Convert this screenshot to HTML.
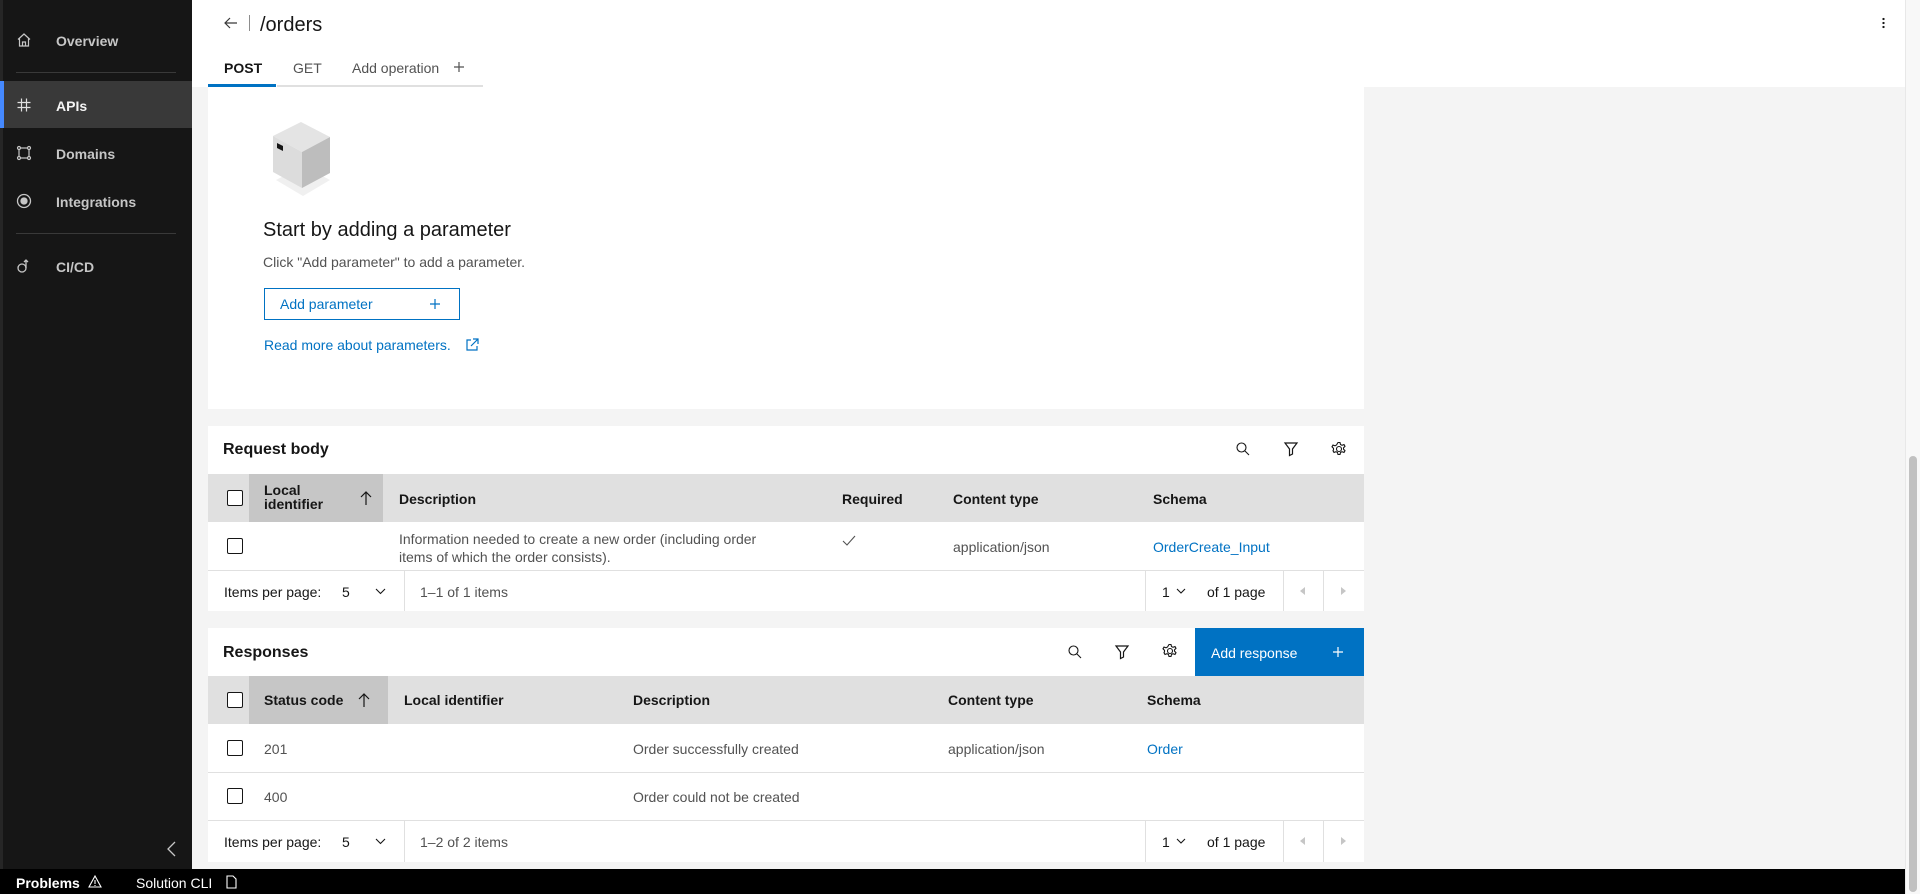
<!DOCTYPE html>
<html><head><meta charset="utf-8"><style>
*{box-sizing:border-box;margin:0;padding:0}
body{width:1920px;height:894px;overflow:hidden;background:#f4f4f4;font-family:"Liberation Sans",sans-serif;color:#161616;position:relative}
.a{position:absolute;white-space:nowrap}
.side{left:0;top:0;width:192px;height:869px;background:#161616}
.nav{color:#c6c6c6;font-size:14px;font-weight:bold;left:56px}
.div{left:16px;width:160px;height:1px;background:#393939}
.panel{background:#fff;left:208px;width:1156px}
.th{background:#e0e0e0}
.hd{font-size:14px;font-weight:bold;color:#161616}
.td{font-size:14px;color:#525252}
.cb{width:16px;height:16px;border:1px solid #161616;border-radius:2px;background:#fff}
.ln{background:#e0e0e0}
.blue{color:#0072c3}
svg{position:absolute}
</style></head><body>
<div class="a side"></div>
<div class="a" style="left:0;top:0;width:3px;height:869px;background:#262626"></div>
<svg style="left:16px;top:32px" width="16" height="16" viewBox="0 0 16 16" fill="none" stroke="#c6c6c6" stroke-width="1.2"><path d="M2 7.5 8 2l6 5.5M3.5 6.5V14h9V6.5M6.5 14V10h3v4"/></svg>
<div class="a nav" style="top:33px">Overview</div>
<div class="a div" style="top:72px;left:16px"></div>
<div class="a" style="left:0;top:81px;width:192px;height:47px;background:#393939"></div>
<div class="a" style="left:0;top:81px;width:4px;height:47px;background:#4589ff"></div>
<svg style="left:16px;top:97px" width="16" height="16" viewBox="0 0 16 16" fill="none" stroke="#e0e0e0" stroke-width="1.2"><path d="M5.5 1.5v13M10.5 1.5v13M1.5 5.5h13M1.5 10.5h13"/></svg>
<div class="a nav" style="top:98px;color:#f4f4f4">APIs</div>
<svg style="left:16px;top:145px" width="16" height="16" viewBox="0 0 16 16" fill="none" stroke="#c6c6c6" stroke-width="1.2"><rect x="3" y="3" width="10" height="10"/><circle cx="3" cy="3" r="1.5" fill="#161616"/><circle cx="13" cy="3" r="1.5" fill="#161616"/><circle cx="3" cy="13" r="1.5" fill="#161616"/><circle cx="13" cy="13" r="1.5" fill="#161616"/></svg>
<div class="a nav" style="top:146px">Domains</div>
<svg style="left:16px;top:193px" width="16" height="16" viewBox="0 0 16 16" fill="none" stroke="#c6c6c6" stroke-width="1.3"><circle cx="8" cy="8" r="6.5"/><circle cx="8" cy="8" r="3" fill="#c6c6c6"/></svg>
<div class="a nav" style="top:194px">Integrations</div>
<div class="a div" style="top:233px"></div>
<svg style="left:16px;top:258px" width="16" height="16" viewBox="0 0 16 16" fill="none" stroke="#c6c6c6" stroke-width="1.3"><circle cx="6" cy="10" r="4"/><path d="M10 10V2M8 4l2-2 2 2"/></svg>
<div class="a nav" style="top:259px">CI/CD</div>
<svg style="left:164px;top:840px" width="16" height="18" viewBox="0 0 16 18" fill="none" stroke="#c6c6c6" stroke-width="1.3"><path d="M11 2 4 9l7 7"/></svg>

<div class="a" style="left:192px;top:0;width:1713px;height:87px;background:#fff"></div>
<svg style="left:223px;top:15px" width="16" height="16" viewBox="0 0 16 16" fill="none" stroke="#393939" stroke-width="1.2"><path d="M14 8H2M7 3 2 8l5 5"/></svg>
<div class="a" style="left:249px;top:15px;width:1px;height:16px;background:#8d8d8d"></div>
<div class="a" style="left:260px;top:14px;font-size:20px">/orders</div>
<div class="a" style="left:1882px;top:17px;width:3px;height:12px;background:radial-gradient(circle,#161616 1px,transparent 1.3px) 0 0/3px 4px"></div>
<div class="a hd" style="left:224px;top:60px">POST</div>
<div class="a td" style="left:293px;top:60px">GET</div>
<div class="a td" style="left:352px;top:60px">Add operation</div>
<svg style="left:454px;top:62px" width="10" height="10" viewBox="0 0 10 10" stroke="#525252" stroke-width="1.2"><path d="M5 0v10M0 5h10"/></svg>
<div class="a" style="left:208px;top:84px;width:68px;height:3px;background:#0072c3"></div>
<div class="a" style="left:277px;top:85px;width:206px;height:2px;background:#e0e0e0"></div>

<div class="a panel" style="top:87px;height:322px"></div>
<svg style="left:268px;top:118px" width="70" height="82" viewBox="0 0 70 82"><polygon points="8,62 35,48 62,62 35,78" fill="#f0f0f0"/><polygon points="5,18 33,4 62,19 34,34" fill="#e4e4e4"/><polygon points="5,18 34,34 34,70 5,54" fill="#dcdcdc"/><polygon points="34,34 62,19 62,55 34,70" fill="#bdbdbd"/><polygon points="9,25 15,28 15,33 9,30" fill="#161616"/></svg>
<div class="a" style="left:263px;top:219px;font-size:20px">Start by adding a parameter</div>
<div class="a td" style="left:263px;top:254px">Click "Add parameter" to add a parameter.</div>
<div class="a" style="left:264px;top:288px;width:196px;height:32px;border:1px solid #0072c3"></div>
<div class="a blue" style="left:280px;top:296px;font-size:14px">Add parameter</div>
<svg style="left:430px;top:299px" width="10" height="10" viewBox="0 0 10 10" stroke="#0072c3" stroke-width="1.2"><path d="M5 0v10M0 5h10"/></svg>
<div class="a blue" style="left:264px;top:337px;font-size:14px">Read more about parameters.</div>
<svg style="left:465px;top:338px" width="14" height="14" viewBox="0 0 14 14" fill="none" stroke="#0072c3" stroke-width="1.2"><path d="M6 2H2v10h10V8M8 1h5v5M13 1 6 8"/></svg>

<div class="a panel" style="top:426px;height:185px"></div>
<div class="a" style="left:223px;top:441px;font-size:16px;font-weight:bold">Request body</div>
<svg style="left:1235px;top:441px" width="16" height="16" viewBox="0 0 16 16" fill="none" stroke="#161616" stroke-width="1.1"><circle cx="6.5" cy="6.5" r="4.5"/><path d="m10 10 4 4"/></svg>
<svg style="left:1283px;top:441px" width="16" height="16" viewBox="0 0 16 16" fill="none" stroke="#161616" stroke-width="1.2"><path d="M2 2h12L9.5 8v5l-3 1.5V8z"/></svg>
<svg style="left:1331px;top:441px" width="16" height="16" viewBox="0 0 16 16" fill="none" stroke="#161616" stroke-width="1.1"><circle cx="8" cy="8" r="2.5"/><path d="M7 1.5h2l.5 2 1.5.8 2-.7 1 1.7-1.5 1.5v1.4l1.5 1.5-1 1.7-2-.7-1.5.8-.5 2H7l-.5-2-1.5-.8-2 .7-1-1.7L2.5 8.7V7.3L1 5.8l1-1.7 2 .7 1.5-.8z"/></svg>
<div class="a th" style="left:208px;top:474px;width:1156px;height:48px"></div>
<div class="a" style="left:249px;top:474px;width:134px;height:48px;background:#c6c6c6"></div>
<div class="a cb" style="left:227px;top:490px"></div>
<div class="a hd" style="left:264px;top:483px;line-height:14px;white-space:normal;width:70px">Local identifier</div>
<svg style="left:358px;top:490px" width="16" height="16" viewBox="0 0 16 16" fill="none" stroke="#161616" stroke-width="1.2"><path d="M8 15V2M3 7l5-5 5 5"/></svg>
<div class="a hd" style="left:399px;top:491px">Description</div>
<div class="a hd" style="left:842px;top:491px">Required</div>
<div class="a hd" style="left:953px;top:491px">Content type</div>
<div class="a hd" style="left:1153px;top:491px">Schema</div>
<div class="a cb" style="left:227px;top:538px"></div>
<div class="a td" style="left:399px;top:530px;line-height:18px">Information needed to create a new order (including order<br>items of which the order consists).</div>
<svg style="left:842px;top:535px" width="14" height="12" viewBox="0 0 14 12" fill="none" stroke="#525252" stroke-width="1.1"><path d="M1 6l4 4 8-9"/></svg>
<div class="a td" style="left:953px;top:539px">application/json</div>
<div class="a blue" style="left:1153px;top:539px;font-size:14px">OrderCreate_Input</div>
<div class="a ln" style="left:208px;top:570px;width:1156px;height:1px"></div>
<div class="a" style="left:224px;top:584px;font-size:14px">Items per page:</div>
<div class="a" style="left:342px;top:584px;font-size:14px">5</div>
<svg style="left:375px;top:588px" width="11" height="7" viewBox="0 0 11 7" fill="none" stroke="#161616" stroke-width="1.1"><path d="M1 1l4.5 4.5L10 1"/></svg>
<div class="a ln" style="left:404px;top:571px;width:1px;height:40px"></div>
<div class="a td" style="left:420px;top:584px">1–1 of 1 items</div>
<div class="a ln" style="left:1145px;top:571px;width:1px;height:40px"></div>
<div class="a" style="left:1162px;top:584px;font-size:14px">1</div>
<svg style="left:1176px;top:588px" width="10" height="7" viewBox="0 0 10 7" fill="none" stroke="#161616" stroke-width="1.1"><path d="M1 1l4 4 4-4"/></svg>
<div class="a" style="left:1207px;top:584px;font-size:14px">of 1 page</div>
<div class="a ln" style="left:1283px;top:571px;width:1px;height:40px"></div>
<svg style="left:1300px;top:587px" width="6" height="8" viewBox="0 0 6 8" fill="#c6c6c6"><path d="M5 0v8L0 4z"/></svg>
<div class="a ln" style="left:1323px;top:571px;width:1px;height:40px"></div>
<svg style="left:1341px;top:587px" width="6" height="8" viewBox="0 0 6 8" fill="#c6c6c6"><path d="M0 0v8l5-4z"/></svg>

<div class="a panel" style="top:628px;height:234px"></div>
<div class="a" style="left:223px;top:644px;font-size:16px;font-weight:bold">Responses</div>
<svg style="left:1067px;top:644px" width="16" height="16" viewBox="0 0 16 16" fill="none" stroke="#161616" stroke-width="1.1"><circle cx="6.5" cy="6.5" r="4.5"/><path d="m10 10 4 4"/></svg>
<svg style="left:1114px;top:644px" width="16" height="16" viewBox="0 0 16 16" fill="none" stroke="#161616" stroke-width="1.2"><path d="M2 2h12L9.5 8v5l-3 1.5V8z"/></svg>
<svg style="left:1162px;top:643px" width="16" height="16" viewBox="0 0 16 16" fill="none" stroke="#161616" stroke-width="1.1"><circle cx="8" cy="8" r="2.5"/><path d="M7 1.5h2l.5 2 1.5.8 2-.7 1 1.7-1.5 1.5v1.4l1.5 1.5-1 1.7-2-.7-1.5.8-.5 2H7l-.5-2-1.5-.8-2 .7-1-1.7L2.5 8.7V7.3L1 5.8l1-1.7 2 .7 1.5-.8z"/></svg>
<div class="a" style="left:1195px;top:628px;width:169px;height:48px;background:#0072c3"></div>
<div class="a" style="left:1211px;top:645px;font-size:14px;color:#fff">Add response</div>
<svg style="left:1333px;top:647px" width="10" height="10" viewBox="0 0 10 10" stroke="#fff" stroke-width="1.2"><path d="M5 0v10M0 5h10"/></svg>
<div class="a th" style="left:208px;top:676px;width:1156px;height:48px"></div>
<div class="a" style="left:249px;top:676px;width:139px;height:48px;background:#c6c6c6"></div>
<div class="a cb" style="left:227px;top:692px"></div>
<div class="a hd" style="left:264px;top:692px">Status code</div>
<svg style="left:356px;top:692px" width="16" height="16" viewBox="0 0 16 16" fill="none" stroke="#161616" stroke-width="1.2"><path d="M8 15V2M3 7l5-5 5 5"/></svg>
<div class="a hd" style="left:404px;top:692px">Local identifier</div>
<div class="a hd" style="left:633px;top:692px">Description</div>
<div class="a hd" style="left:948px;top:692px">Content type</div>
<div class="a hd" style="left:1147px;top:692px">Schema</div>
<div class="a cb" style="left:227px;top:740px"></div>
<div class="a td" style="left:264px;top:741px">201</div>
<div class="a td" style="left:633px;top:741px">Order successfully created</div>
<div class="a td" style="left:948px;top:741px">application/json</div>
<div class="a blue" style="left:1147px;top:741px;font-size:14px">Order</div>
<div class="a ln" style="left:208px;top:772px;width:1156px;height:1px"></div>
<div class="a cb" style="left:227px;top:788px"></div>
<div class="a td" style="left:264px;top:789px">400</div>
<div class="a td" style="left:633px;top:789px">Order could not be created</div>
<div class="a ln" style="left:208px;top:820px;width:1156px;height:1px"></div>
<div class="a" style="left:224px;top:834px;font-size:14px">Items per page:</div>
<div class="a" style="left:342px;top:834px;font-size:14px">5</div>
<svg style="left:375px;top:838px" width="11" height="7" viewBox="0 0 11 7" fill="none" stroke="#161616" stroke-width="1.1"><path d="M1 1l4.5 4.5L10 1"/></svg>
<div class="a ln" style="left:404px;top:821px;width:1px;height:41px"></div>
<div class="a td" style="left:420px;top:834px">1–2 of 2 items</div>
<div class="a ln" style="left:1145px;top:821px;width:1px;height:41px"></div>
<div class="a" style="left:1162px;top:834px;font-size:14px">1</div>
<svg style="left:1176px;top:838px" width="10" height="7" viewBox="0 0 10 7" fill="none" stroke="#161616" stroke-width="1.1"><path d="M1 1l4 4 4-4"/></svg>
<div class="a" style="left:1207px;top:834px;font-size:14px">of 1 page</div>
<div class="a ln" style="left:1283px;top:821px;width:1px;height:41px"></div>
<svg style="left:1300px;top:837px" width="6" height="8" viewBox="0 0 6 8" fill="#c6c6c6"><path d="M5 0v8L0 4z"/></svg>
<div class="a ln" style="left:1323px;top:821px;width:1px;height:41px"></div>
<svg style="left:1341px;top:837px" width="6" height="8" viewBox="0 0 6 8" fill="#c6c6c6"><path d="M0 0v8l5-4z"/></svg>

<div class="a" style="left:0;top:869px;width:1905px;height:25px;background:#000"></div>
<div class="a" style="left:16px;top:875px;font-size:14px;font-weight:bold;color:#fff">Problems</div>
<svg style="left:88px;top:875px" width="14" height="13" viewBox="0 0 14 13" fill="none" stroke="#fff" stroke-width="1.1"><path d="M7 1 1 12h12zM7 5v4M7 10v1"/></svg>
<div class="a" style="left:136px;top:875px;font-size:14px;color:#fff">Solution CLI</div>
<svg style="left:226px;top:875px" width="12" height="14" viewBox="0 0 12 14" fill="none" stroke="#fff" stroke-width="1.1"><path d="M1 1h6l3 3v9H1z"/></svg>

<div class="a" style="left:1905px;top:0;width:15px;height:894px;background:#f8f8f8;border-left:1px solid #e8e8e8"></div>
<div class="a" style="left:1909px;top:456px;width:8px;height:436px;background:#c1c1c1;border-radius:4px"></div>
</body></html>
